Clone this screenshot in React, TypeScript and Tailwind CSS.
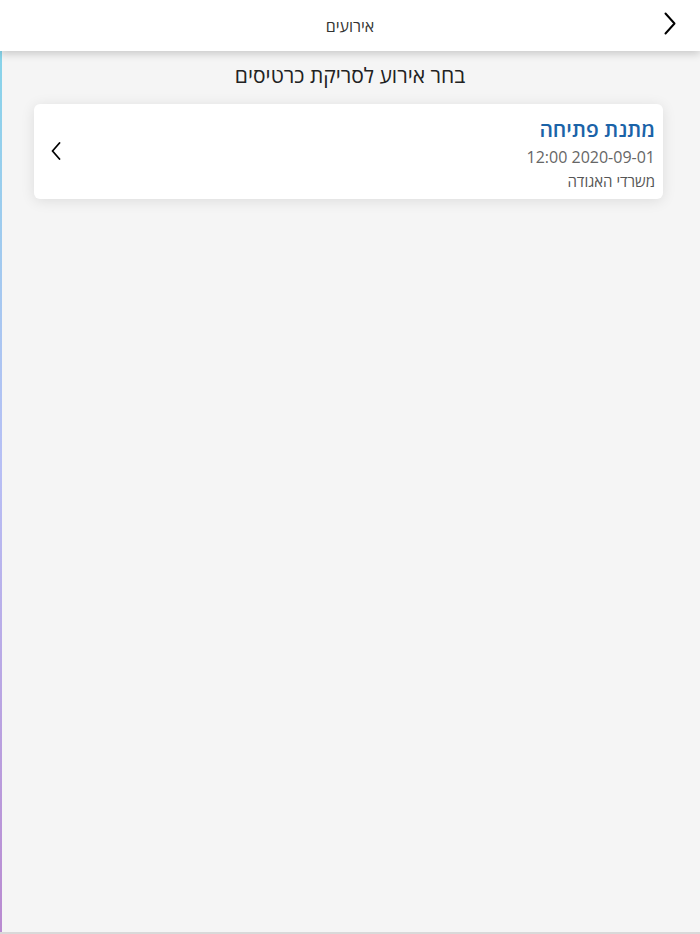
type EventItem = { id: number; name: string; date: string; time: string; place: string };

const events: EventItem[] = [
  { id: 1, name: "מתנת פתיחה", date: "2020-09-01", time: "12:00", place: "משרדי האגודה" },
];

export default function App() {
  return (
    <div
      dir="rtl"
      className="relative flex h-[934px] w-[700px] flex-col overflow-hidden bg-[#f5f5f5] border-b-2 border-[#d9d9d9]"
      style={{ fontFamily: '"Open Sans", "Noto Sans", sans-serif' }}
    >
      <div className="absolute left-0 top-0 bottom-0 w-[2px] bg-gradient-to-b from-[#7fd6e8] via-[#b7bff5] to-[#b98ad0]" />

      <header className="relative z-10 flex h-[51px] items-center justify-center bg-white shadow-[0_3px_8px_rgba(0,0,0,0.18)]">
        <button className="absolute right-[24px] top-[12px] text-black">
          <svg width="12" height="23" viewBox="0 0 12 23" fill="none" stroke="currentColor" strokeWidth={2} strokeLinecap="round" strokeLinejoin="round">
            <path d="M1.5 1.5 L10.5 11.5 L1.5 21.5" />
          </svg>
        </button>
        <span className="text-[16px] text-[#333]">אירועים</span>
      </header>

      <h1 className="mt-[10px] text-center text-[21px] leading-[28px] text-[#222]">בחר אירוע לסריקת כרטיסים</h1>

      <div className="mt-[15px] mr-[37px] ml-[34px] flex flex-col gap-3">
        {events.map((ev) => (
          <div
            key={ev.id}
            className="flex h-[95px] items-center justify-between rounded-[6px] bg-white pr-[8px] pl-[17px] shadow-[0_2px_14px_rgba(0,0,0,0.1)]"
          >
            <div className="flex flex-col pt-[4px]">
              <span className="text-[21px] font-semibold leading-[28px] text-[#1b63a8]">{ev.name}</span>
              <span dir="ltr" className="mt-[2px] text-right text-[16px] leading-[24px] text-[#666]">
                {ev.time} {ev.date}
              </span>
              <span className="mt-[1px] text-[15px] leading-[22px] text-[#555]">{ev.place}</span>
            </div>
            <svg width="10" height="18" viewBox="0 0 10 18" fill="none" stroke="currentColor" strokeWidth={1.8} strokeLinecap="round" strokeLinejoin="round" className="text-black mb-[1px]">
              <path d="M8.5 1 L1.5 9 L8.5 17" />
            </svg>
          </div>
        ))}
      </div>
    </div>
  );
}
